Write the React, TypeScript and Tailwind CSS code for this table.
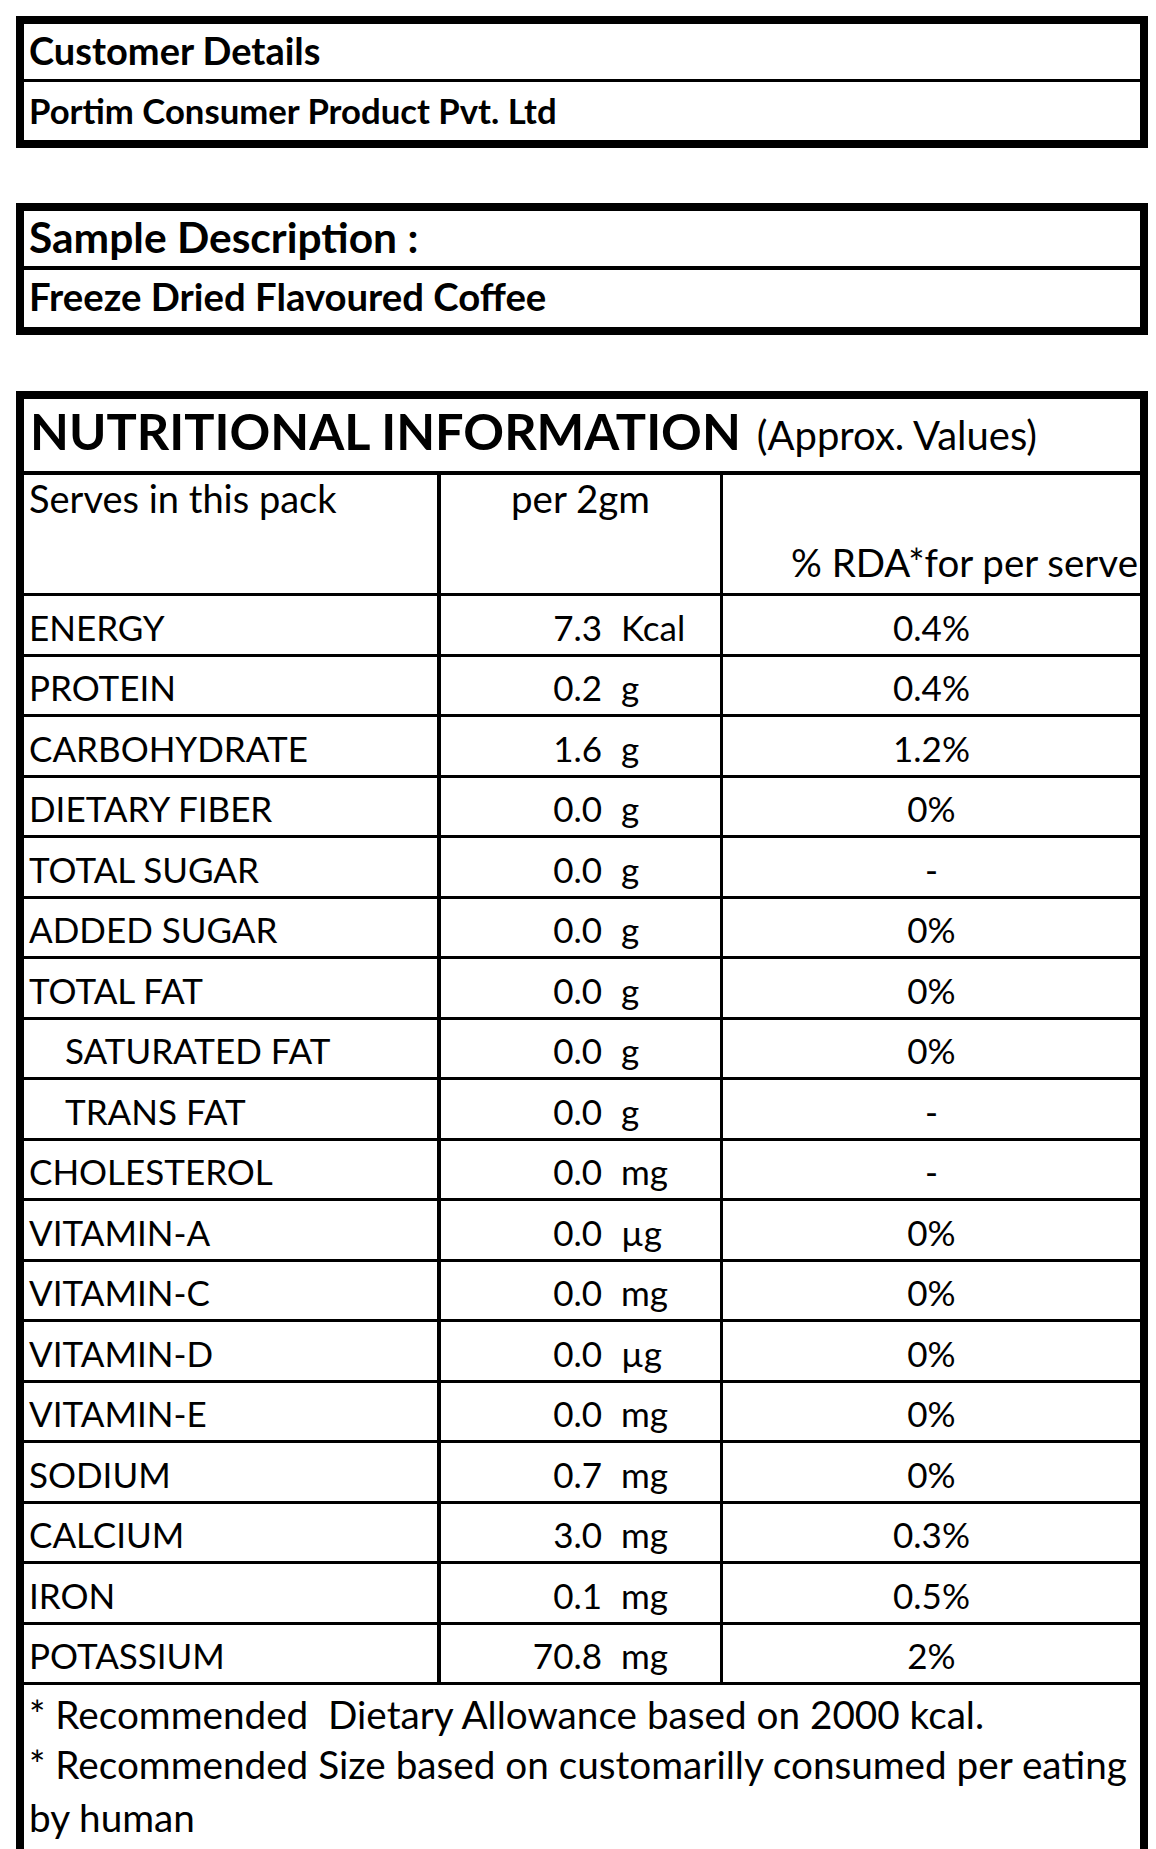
import React from "react";

type Row = { name: string; num: string; unit: string; rda: string; indent?: boolean };

const rows: Row[] = [
  { name: "ENERGY", num: "7.3", unit: "Kcal", rda: "0.4%" },
  { name: "PROTEIN", num: "0.2", unit: "g", rda: "0.4%" },
  { name: "CARBOHYDRATE", num: "1.6", unit: "g", rda: "1.2%" },
  { name: "DIETARY FIBER", num: "0.0", unit: "g", rda: "0%" },
  { name: "TOTAL SUGAR", num: "0.0", unit: "g", rda: "-" },
  { name: "ADDED SUGAR", num: "0.0", unit: "g", rda: "0%" },
  { name: "TOTAL FAT", num: "0.0", unit: "g", rda: "0%" },
  { name: "SATURATED FAT", num: "0.0", unit: "g", rda: "0%", indent: true },
  { name: "TRANS FAT", num: "0.0", unit: "g", rda: "-", indent: true },
  { name: "CHOLESTEROL", num: "0.0", unit: "mg", rda: "-" },
  { name: "VITAMIN-A", num: "0.0", unit: "µg", rda: "0%" },
  { name: "VITAMIN-C", num: "0.0", unit: "mg", rda: "0%" },
  { name: "VITAMIN-D", num: "0.0", unit: "µg", rda: "0%" },
  { name: "VITAMIN-E", num: "0.0", unit: "mg", rda: "0%" },
  { name: "SODIUM", num: "0.7", unit: "mg", rda: "0%" },
  { name: "CALCIUM", num: "3.0", unit: "mg", rda: "0.3%" },
  { name: "IRON", num: "0.1", unit: "mg", rda: "0.5%" },
  { name: "POTASSIUM", num: "70.8", unit: "mg", rda: "2%" },
];

export default function App() {
  return (
    <div className="min-h-[1849px] w-[1156px] bg-white pl-[16px] pt-[16px] font-['Lato',sans-serif] text-black">
      <div className="flex w-[1132px] flex-col">
        {/* Customer details */}
        <div className="flex flex-col border-[8px] border-black">
          <div className="flex h-[58px] items-end border-b-[3px] border-black pb-[10px] pl-[5px]">
            <span className="text-[38px] font-bold leading-none">Customer Details</span>
          </div>
          <div className="flex h-[58px] items-end pb-[11px] pl-[5px]">
            <span className="text-[34.7px] font-bold leading-none">Portim Consumer Product Pvt. Ltd</span>
          </div>
        </div>

        {/* Sample description */}
        <div className="mt-[55px] flex flex-col border-[8px] border-black">
          <div className="flex h-[59px] items-end border-b-[4px] border-black pb-[8px] pl-[5px]">
            <span className="text-[42.5px] font-bold leading-none">Sample Description :</span>
          </div>
          <div className="flex h-[57px] items-end pb-[12px] pl-[5px]">
            <span className="text-[38.3px] font-bold leading-none">Freeze Dried Flavoured Coffee</span>
          </div>
        </div>

        {/* Nutrition table */}
        <div className="mt-[56px] flex flex-col border-x-[8px] border-t-[8px] border-black">
          <div className="flex h-[76px] items-end border-b-[4px] border-black pb-[15px] pl-[6px]">
            <div className="flex items-baseline">
              <span className="text-[50.5px] font-bold leading-none">NUTRITIONAL INFORMATION</span>
              <span className="ml-[16px] text-[40px] leading-none">(Approx. Values)</span>
            </div>
          </div>

          <div className="flex h-[121px] border-b-[3px] border-black text-[38.5px] leading-none">
            <div className="w-[417px] border-r-[4px] border-black pl-[5px] pt-[4px] text-[38px]">Serves in this pack</div>
            <div className="flex w-[282px] justify-center border-r-[3px] border-black pt-[4px]">per 2gm</div>
            <div className="flex flex-1 items-end justify-end pb-[12px] pr-[2px] whitespace-nowrap">% RDA*for per serve</div>
          </div>

          {rows.map((r) => (
            <div key={r.name} className="flex h-[60.5px] border-b-[3px] border-black text-[35px] leading-none">
              <div
                className={`flex w-[417px] items-end border-r-[4px] border-black pb-[9px] ${
                  r.indent ? "pl-[41px]" : "pl-[5px]"
                }`}
              >
                {r.name}
              </div>
              <div className="flex w-[282px] items-end border-r-[3px] border-black pb-[9px]">
                <span className="w-[161px] text-right">{r.num}</span>
                <span className="ml-[19px]">{r.unit}</span>
              </div>
              <div className="flex flex-1 items-end justify-center pb-[9px]">{r.rda}</div>
            </div>
          ))}

          <div className="h-[170px] pl-[5px] pt-[4px] text-[38.7px] leading-[50px]">
            <div className="whitespace-pre">{"* Recommended  Dietary Allowance based on 2000 kcal."}</div>
            <div className="whitespace-nowrap">* Recommended Size based on customarilly consumed per eating</div>
            <div className="mt-[3px]">by human</div>
          </div>
        </div>
      </div>
    </div>
  );
}
